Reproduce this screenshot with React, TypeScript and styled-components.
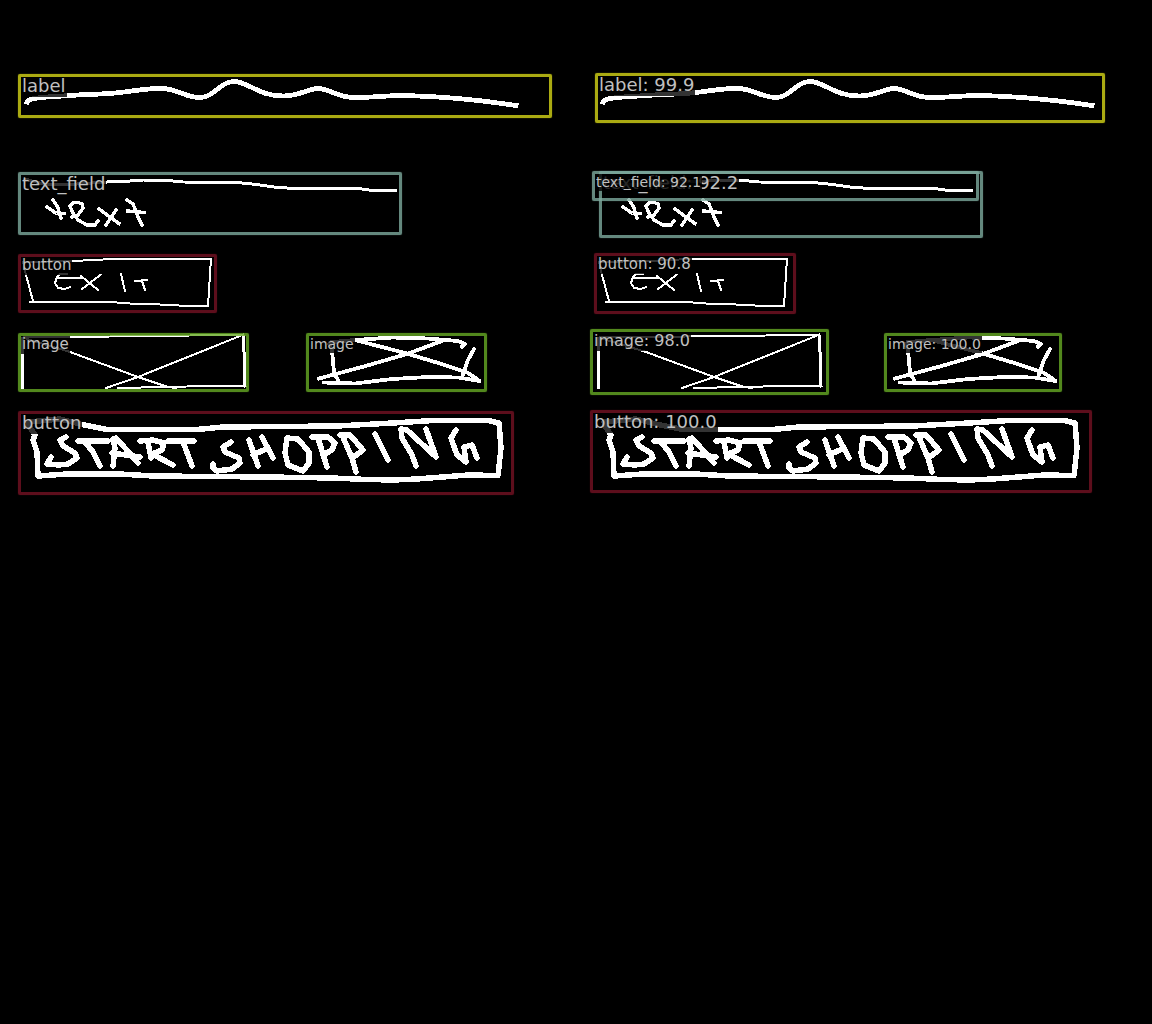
import React from "react";
import styled, { createGlobalStyle } from "styled-components";

const GlobalStyle = createGlobalStyle`
  body {
    margin: 0;
    background: #000;
    font-family: "DejaVu Sans", sans-serif;
  }
`;

const Comparison = styled.main`
  display: grid;
  grid-template-columns: repeat(2, minmax(0, 1fr));
  min-height: 100vh;
  background: #000;
`;

const Canvas = styled.section`
  position: relative;
`;

const Drawing = styled.svg`
  display: block;
  width: 576px;
  height: 512px;
  fill: none;
  stroke: #fff;
  stroke-linecap: square;
  stroke-linejoin: round;
`;

const Caption = styled.g`
  stroke-width: 5.5px;
  stroke-linecap: round;
`;

const palette = {
  label: "rgba(212, 212, 22, 0.8)",
  text_field: "rgba(125, 170, 158, 0.8)",
  button: "rgba(116, 17, 35, 0.8)",
  image: "rgba(102, 170, 36, 0.8)",
};

type Kind = keyof typeof palette;

type Detection = {
  kind: Kind;
  score?: string;
  x: number;
  y: number;
  w: number;
  h: number;
  size: number;
};

const Region = styled.div<{ $d: Detection }>`
  position: absolute;
  box-sizing: border-box;
  left: ${({ $d }) => $d.x}px;
  top: ${({ $d }) => $d.y}px;
  width: ${({ $d }) => $d.w}px;
  height: ${({ $d }) => $d.h}px;
  border: 3px solid ${({ $d }) => palette[$d.kind]};
  border-radius: 2px;
  box-shadow: 0 0 1px ${({ $d }) => palette[$d.kind]};
`;

const Tag = styled.span<{ $size: number }>`
  display: block;
  width: max-content;
  padding: ${({ $size }) => ($size < 18 ? "1px 1px 2px" : "0 1px 2px")};
  background: rgba(0, 0, 0, 0.8);
  color: #c0c0c0;
  font-size: ${({ $size }) => $size}px;
  line-height: 1;
  white-space: nowrap;
`;

const truth: Detection[] = [
  { kind: "label", x: 18, y: 74, w: 534, h: 44, size: 18 },
  { kind: "text_field", x: 18, y: 172, w: 384, h: 63, size: 18 },
  { kind: "button", x: 18, y: 254, w: 199, h: 59, size: 15 },
  { kind: "image", x: 18, y: 333, w: 231, h: 59, size: 15 },
  { kind: "image", x: 306, y: 333, w: 181, h: 59, size: 14 },
  { kind: "button", x: 18, y: 411, w: 496, h: 84, size: 18 },
];

const predictions: Detection[] = [
  { kind: "label", score: "99.9", x: 19, y: 73, w: 510, h: 50, size: 18 },
  { kind: "text_field", score: "92.2", x: 23, y: 171, w: 384, h: 67, size: 18 },
  { kind: "text_field", score: "92.1", x: 16, y: 171, w: 387, h: 30, size: 14 },
  { kind: "button", score: "90.8", x: 18, y: 253, w: 202, h: 61, size: 15 },
  { kind: "image", score: "98.0", x: 14, y: 329, w: 239, h: 66, size: 16 },
  { kind: "image", score: "100.0", x: 308, y: 333, w: 178, h: 59, size: 14 },
  { kind: "button", score: "100.0", x: 14, y: 410, w: 502, h: 83, size: 18 },
];

// Pen strokes of the hand-drawn wireframe, grouped by pen width.
const strokes: { width: number; paths: string[] }[] = [
  {
    width: 4.8,
    paths: [
      "M27 102C29 97 50 97 70 95.5S103 94.5 120 92.5S150 88 162 88.5C178 89 185 97.5 200 97.5C214 97.5 220 81.5 234 81.5C248 81.5 258 96 283 96C300 96 308 88.5 318 88.5C330 88.5 336 97.5 355 97.5C375 97.5 385 95.5 404 95.5C450 96.5 480 100 516 105.5",
    ],
  },
  {
    width: 3,
    paths: [
      "M25 179L43 184L77 184L107 182L130 181L143 180L168 180.5L183 182L237 182.5L257 184.5L277 187.5L297 188.5L358 188.5L373 190.5L395 190.5",
    ],
  },
  {
    width: 3.4,
    paths: [
      "M53 200L57.5 206.5L61 218M47 207L56.5 213.5L64.5 213.5",
      "M72 217L78 215L83 208L82 204L78 202.5L73 202.5L70 206L73 213L78 220L87 225L95 225L98 221",
      "M99 209L119 223.5M116 210L106 225",
      "M127 200L133 204L138 217L142 225M144 212.5L128 211",
    ],
  },
  {
    width: 2,
    paths: [
      "M73 261L113 259L197 259L211 258.5L208 306L188 306L160 304.5L137 304L110 302L30 302M33 301L26 275L23 262L73 261",
      "M67 274L60 274L57 277L55 283L58 288L65 289L70 287M58 277.5L82 277.5M81 276L98 290M101 274.5L82 289",
      "M121 274L125 291M135 281L147 280M142 281L145 290",
      "M24 338L70 352L138 377L168 387L176 388M240 336L138 377L106 388",
      "M24 337L70 337L150 336L190 335.5L243 334.5M118 388L210 386L245 386.5",
    ],
  },
  {
    width: 3,
    paths: ["M22 338V387M243 335L244 352L245 386"],
  },
  {
    width: 3.8,
    paths: [
      "M332 342L355 340L392 337.5L428 338.5L458 341L465 344L462 346.5",
      "M355 340L405 353L445 365L468 373L479 380.5M442 341L407 354L362 367L319 378.5",
      "M329 344L332 350L334 373L338 380M324 382.5L355 383.5L392 379L428 377L458 377.5L479 381M474 349L468 360L463 375",
    ],
  },
  {
    width: 5.5,
    paths: [
      "M28 422L60 419L82 424.5L107 429.5L197 429.5L223 427L337 426L393 423L433 420.5L488 420.5L499 423L501 448L498 475.5L468 475L417 479L393 480L367 479.5L332 478L268 477L153 476L120 474L67 474L38 476L37 452L33 440L35 435L29 426Z",
    ],
  },
];

// Rounder marker strokes used for the call-to-action caption.
const caption = [
  "M66 437L60 440L63 446L75 453L77 458L68 464L59 465L47 464L51 457",
  "M78 441L108 441M85 442L93 452L100 466",
  "M113 466L115 448L113 439L116 438L125 448L138 463M112 453L140 457",
  "M140 441L153 440L164 443L162 450L152 454L173 465M148 442L151 458",
  "M168 441L194 441M183 442L188 455L192 466",
  "M231 442L223 447L225 452L239 458L240 463L232 469L217 471L213 468L213 464",
  "M249 440L258 466M262 437L273 458M253 455L268 448",
  "M287 438L285 453L288 465L303 471L309 463L309 452L298 439Z",
  "M312 437L328 437L335 443L332 450L323 455M318 438L327 467",
  "M340 435L350 435L363 450L355 456L351 456M343 437L352 458L356 472",
  "M375 434L388 460",
  "M416 466L412 455L402 438L401 429L407 430L436 457M426 429L436 457",
  "M456 430L451 438L457 455L466 462L464 447L472 445L477 458",
];

function Sketch() {
  return (
    <Drawing
      viewBox="0 0 576 512"
      shapeRendering="crispEdges"
      role="img"
      aria-label="Hand-drawn wireframe"
    >
      {strokes.map((group, i) => (
        <g key={i} strokeWidth={group.width}>
          {group.paths.map((d) => (
            <path key={d} d={d} />
          ))}
        </g>
      ))}
      <Caption>
        {caption.map((d) => (
          <path key={d} d={d} />
        ))}
      </Caption>
    </Drawing>
  );
}

function Annotated({ name, items }: { name: string; items: Detection[] }) {
  return (
    <Canvas aria-label={name}>
      <Sketch />
      {items.map((d, i) => (
        <Region key={i} $d={d}>
          <Tag $size={d.size}>{d.score ? `${d.kind}: ${d.score}` : d.kind}</Tag>
        </Region>
      ))}
    </Canvas>
  );
}

export default function App() {
  return (
    <>
      <GlobalStyle />
      <Comparison>
        <Annotated name="Ground truth" items={truth} />
        <Annotated name="Predictions" items={predictions} />
      </Comparison>
    </>
  );
}
